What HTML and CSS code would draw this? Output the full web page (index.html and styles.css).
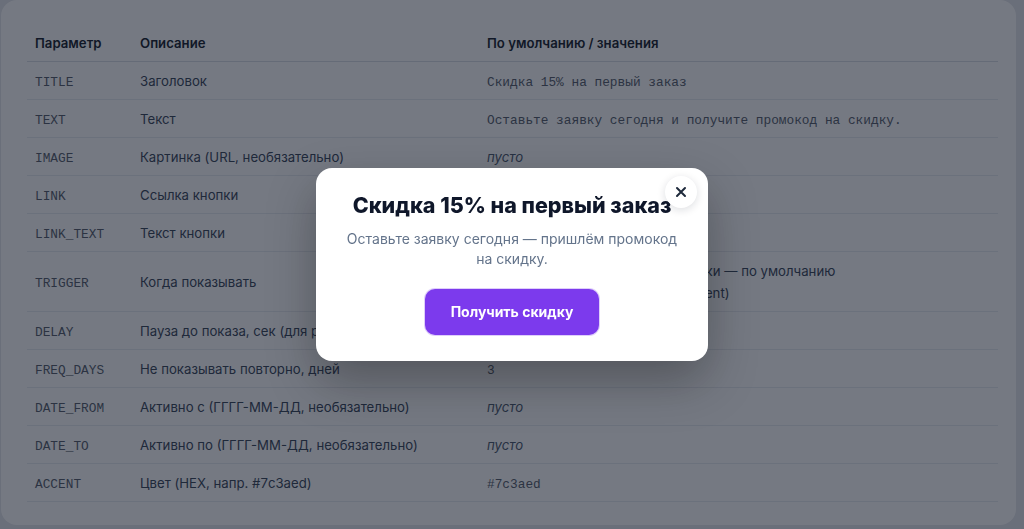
FILE: index.html
```html
<!DOCTYPE html>
<html lang="ru">
<head>
	<meta charset="utf-8">
	<title>Попап со скидкой — параметры</title>
	<link rel="stylesheet" href="styles.css">
</head>
<body>
	<div class="card">
		<table class="params">
			<thead>
				<tr>
					<th class="col-name">Параметр</th>
					<th class="col-desc">Описание</th>
					<th>По умолчанию / значения</th>
				</tr>
			</thead>
			<tbody>
				<tr><td><code>TITLE</code></td><td>Заголовок</td><td><code>Скидка 15% на первый заказ</code></td></tr>
				<tr><td><code>TEXT</code></td><td>Текст</td><td><code>Оставьте заявку сегодня и получите промокод на скидку.</code></td></tr>
				<tr><td><code>IMAGE</code></td><td>Картинка (URL, необязательно)</td><td><em>пусто</em></td></tr>
				<tr><td><code>LINK</code></td><td>Ссылка кнопки</td><td><code>#</code></td></tr>
				<tr><td><code>LINK_TEXT</code></td><td>Текст кнопки</td><td><code>Получить</code></td></tr>
				<tr><td><code>TRIGGER</code></td><td>Когда показывать</td><td>delay — через паузу после загрузки — по умолчанию<br>exit — при попытке ухода (exit_intent)</td></tr>
				<tr><td><code>DELAY</code></td><td>Пауза до показа, сек (для режима delay)</td><td><code>5</code></td></tr>
				<tr><td><code>FREQ_DAYS</code></td><td>Не показывать повторно, дней</td><td><code>3</code></td></tr>
				<tr><td><code>DATE_FROM</code></td><td>Активно с (ГГГГ-ММ-ДД, необязательно)</td><td><em>пусто</em></td></tr>
				<tr><td><code>DATE_TO</code></td><td>Активно по (ГГГГ-ММ-ДД, необязательно)</td><td><em>пусто</em></td></tr>
				<tr><td><code>ACCENT</code></td><td>Цвет (HEX, напр. #7c3aed)</td><td><code>#7c3aed</code></td></tr>
			</tbody>
		</table>
	</div>

	<div class="overlay">
		<div class="popup">
			<button class="popup-close" aria-label="Закрыть">
				<svg width="14" height="14" viewBox="0 0 14 14">
					<path d="M3 3 L11 11 M11 3 L3 11" stroke="#1e293b" stroke-width="2" stroke-linecap="round"/>
				</svg>
			</button>
			<h2 class="popup-title">Скидка 15% на первый заказ</h2>
			<p class="popup-text">Оставьте заявку сегодня — пришлём промокод на скидку.</p>
			<a href="#" class="popup-btn">Получить скидку</a>
		</div>
	</div>
</body>
</html>
```

FILE: styles.css
```css
body {
	margin: 0;
	padding: 0 8px 0 1px;
	background-color: #e5e7eb;
	font-family: Inter, "Noto Sans", sans-serif;
	color: #334155;
	overflow: hidden;
}

.card {
	background-color: #fff;
	border-radius: 16px;
	padding: 25px 18px 23px 26px;
}

.params {
	width: 100%;
	border-collapse: collapse;
	font-size: 13.2px;
}

.params th {
	text-align: left;
	font-weight: 600;
	font-size: 13.2px;
	line-height: 20px;
	color: #111827;
	padding: 8px;
	border-bottom: 1px solid #d8dde5;
}

.params td {
	line-height: 22px;
	padding: 8px 8px 7px;
	border-bottom: 1px solid #e8ebf0;
	vertical-align: middle;
}

.col-name {
	width: 89px;
}

.col-desc {
	width: 331px;
}

.params code {
	font-family: "Liberation Mono", "Courier New", monospace;
	font-size: 12.8px;
	line-height: 1;
	color: #525a67;
}

.params em {
	color: #475569;
}

/* затемнение и попап */
.overlay {
	position: fixed;
	inset: 0;
	background-color: rgba(17, 24, 39, 0.58);
	display: flex;
	align-items: center;
	justify-content: center;
}

.popup {
	position: relative;
	width: 336px;
	padding: 23px 28px 26px;
	background-color: #fff;
	border-radius: 16px;
	text-align: center;
	box-shadow: 0 20px 50px rgba(0, 0, 0, 0.3);
}

.popup-close {
	position: absolute;
	top: 8px;
	right: 11px;
	width: 32px;
	height: 32px;
	border: none;
	border-radius: 50%;
	background-color: #fff;
	box-shadow: 0 2px 8px rgba(15, 23, 42, 0.14);
	display: flex;
	align-items: center;
	justify-content: center;
	padding: 0;
	cursor: pointer;
}

.popup-title {
	margin: 0;
	font-size: 21.5px;
	line-height: 28px;
	font-weight: 800;
	color: #0f172a;
	white-space: nowrap;
}

.popup-text {
	margin: 10px 0 0;
	font-size: 14px;
	line-height: 20px;
	color: #64748b;
}

.popup-btn {
	display: inline-block;
	margin-top: 20px;
	padding: 12px 26px;
	font-size: 14px;
	line-height: 22px;
	font-weight: 700;
	color: #fff;
	text-decoration: none;
	background-color: #7c3aed;
	border-radius: 10px;
	box-shadow: 0 0 0 1px rgba(124, 58, 237, 0.25);
}
```
